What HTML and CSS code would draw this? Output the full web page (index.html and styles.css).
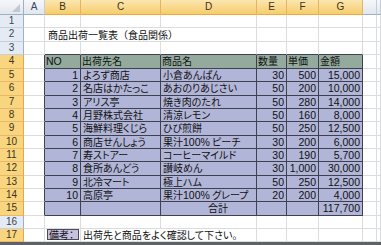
FILE: index.html
```html
<!DOCTYPE html>
<html lang="ja">
<head>
<meta charset="utf-8">
<title>商品出荷一覧表</title>
<link rel="stylesheet" href="styles.css">
</head>
<body>
<div class="sheet">
  <div class="c corner"><span class="tri"></span></div>
  <div class="c ch">A</div>
  <div class="c ch sel">B</div>
  <div class="c ch sel">C</div>
  <div class="c ch sel">D</div>
  <div class="c ch sel">E</div>
  <div class="c ch sel">F</div>
  <div class="c ch sel">G</div>
  <div class="c ch"></div>
  <div class="c ch"></div>

  <div class="c rh">1</div>
  <div class="c"></div><div class="c"></div><div class="c"></div><div class="c"></div><div class="c"></div><div class="c"></div><div class="c"></div><div class="c"></div><div class="c"></div>

  <div class="c rh">2</div>
  <div class="c"></div>
  <div class="c title span3">商品出荷一覧表（食品関係）</div>
  <div class="c"></div><div class="c"></div><div class="c"></div><div class="c"></div><div class="c"></div>

  <div class="c rh">3</div>
  <div class="c"></div>
  <div class="c tt"></div><div class="c tt"></div><div class="c tt"></div><div class="c tt"></div><div class="c tt"></div><div class="c tt"></div>
  <div class="c"></div><div class="c"></div>

  <div class="c rh sel">4</div>
  <div class="c tl"></div>
  <div class="c t th"><span class="hw">NO</span></div>
  <div class="c t th">出荷先名</div>
  <div class="c t th">商品名</div>
  <div class="c t th">数量</div>
  <div class="c t th">単価</div>
  <div class="c t th">金額</div>
  <div class="c"></div><div class="c"></div>

  <div class="c rh sel">5</div>
  <div class="c tl"></div>
  <div class="c t n">1</div><div class="c t">よろず商店</div><div class="c t">小倉あんぱん</div>
  <div class="c t n">30</div><div class="c t n">500</div><div class="c t n">15,000</div>
  <div class="c"></div><div class="c"></div>

  <div class="c rh sel">6</div>
  <div class="c tl"></div>
  <div class="c t n">2</div><div class="c t">名店はかたっこ</div><div class="c t">あおのりあじさい</div>
  <div class="c t n">50</div><div class="c t n">200</div><div class="c t n">10,000</div>
  <div class="c"></div><div class="c"></div>

  <div class="c rh sel">7</div>
  <div class="c tl"></div>
  <div class="c t n">3</div><div class="c t">アリス亭</div><div class="c t">焼き肉のたれ</div>
  <div class="c t n">50</div><div class="c t n">280</div><div class="c t n">14,000</div>
  <div class="c"></div><div class="c"></div>

  <div class="c rh sel">8</div>
  <div class="c tl"></div>
  <div class="c t n">4</div><div class="c t">月野株式会社</div><div class="c t">清涼レモン</div>
  <div class="c t n">50</div><div class="c t n">160</div><div class="c t n">8,000</div>
  <div class="c"></div><div class="c"></div>

  <div class="c rh sel">9</div>
  <div class="c tl"></div>
  <div class="c t n">5</div><div class="c t">海鮮料理くじら</div><div class="c t">ひび煎餅</div>
  <div class="c t n">50</div><div class="c t n">250</div><div class="c t n">12,500</div>
  <div class="c"></div><div class="c"></div>

  <div class="c rh sel">10</div>
  <div class="c tl"></div>
  <div class="c t n">6</div><div class="c t">商店せんしょう</div><div class="c t">果汁<span class="hw">100%</span> ピーチ</div>
  <div class="c t n">30</div><div class="c t n">200</div><div class="c t n">6,000</div>
  <div class="c"></div><div class="c"></div>

  <div class="c rh sel">11</div>
  <div class="c tl"></div>
  <div class="c t n">7</div><div class="c t">寿ストアー</div><div class="c t">コーヒーマイルド</div>
  <div class="c t n">30</div><div class="c t n">190</div><div class="c t n">5,700</div>
  <div class="c"></div><div class="c"></div>

  <div class="c rh sel">12</div>
  <div class="c tl"></div>
  <div class="c t n">8</div><div class="c t">食所あんどう</div><div class="c t">讃岐めん</div>
  <div class="c t n">30</div><div class="c t n">1,000</div><div class="c t n">30,000</div>
  <div class="c"></div><div class="c"></div>

  <div class="c rh sel">13</div>
  <div class="c tl"></div>
  <div class="c t n">9</div><div class="c t">北冷マート</div><div class="c t">極上ハム</div>
  <div class="c t n">50</div><div class="c t n">250</div><div class="c t n">12,500</div>
  <div class="c"></div><div class="c"></div>

  <div class="c rh sel">14</div>
  <div class="c tl"></div>
  <div class="c t n">10</div><div class="c t">高原亭</div><div class="c t">果汁<span class="hw">100%</span> グレープ</div>
  <div class="c t n">20</div><div class="c t n">200</div><div class="c t n">4,000</div>
  <div class="c"></div><div class="c"></div>

  <div class="c rh sel">15</div>
  <div class="c tl"></div>
  <div class="c t"></div><div class="c t"></div><div class="c t total">合計</div>
  <div class="c t"></div><div class="c t"></div><div class="c t n">117,700</div>
  <div class="c"></div><div class="c"></div>

  <div class="c rh">16</div>
  <div class="c"></div><div class="c"></div><div class="c"></div><div class="c"></div><div class="c"></div><div class="c"></div><div class="c"></div><div class="c"></div><div class="c"></div>

  <div class="c rh sel">17</div>
  <div class="c"></div>
  <div class="c note"><span class="note-box">備考：</span></div>
  <div class="c span2 remark">出荷先と商品をよく確認して下さい。</div>
  <div class="c"></div><div class="c"></div><div class="c"></div><div class="c"></div><div class="c"></div>
</div>
</body>
</html>
```
FILE: styles.css
```css
html, body {
  margin: 0;
  padding: 0;
  background: #ffffff;
}

body {
  width: 381px;
  height: 245px;
  overflow: hidden;
}

.sheet {
  display: grid;
  grid-template-columns: 24px 21px 36px 80px 96px 30px 32px 44px 14px 4px;
  grid-template-rows: 15px 13px 14px 13px 14px 13px 14px 13px 13px 14px 13px 13px 14px 13px 13px 14px 13px 13px;
  width: 381px;
  border-bottom: 3px solid #5e6166;
  background: #ffffff;
}

.c {
  box-sizing: border-box;
  border-right: 1px solid #dadcdd;
  border-bottom: 1px solid #dadcdd;
  font-family: "Noto Sans CJK JP", sans-serif;
  font-size: 10px;
  line-height: 12px;
  font-feature-settings: "palt" 1;
  color: #111111;
  white-space: nowrap;
  padding: 0 1px 0 2px;
  min-width: 0;
}

.span3 { grid-column: span 3; }
.span2 { grid-column: span 2; }

.title {
  padding-left: 3px;
  line-height: 13px;
  font-feature-settings: normal;
}

.remark {
  padding-left: 2px;
}

/* column headers */
.ch {
  background: linear-gradient(#f5f7fa, #e2e7ee);
  border-right-color: #c6ccd5;
  border-bottom-color: #9eb0c6;
  font-family: "Liberation Sans", Arial, sans-serif;
  font-size: 10px;
  line-height: 14px;
  text-align: center;
  color: #3b4656;
  padding: 0;
}

.ch.sel {
  background: linear-gradient(#fbe6b0, #f6cd6c);
  border-right-color: #e2b562;
  border-bottom-color: #f0a73e;
  color: #3a3420;
}

.corner {
  position: relative;
  background: linear-gradient(#f5f7fa, #e2e7ee);
  border-right-color: #9eb0c6;
  border-bottom-color: #9eb0c6;
  padding: 0;
}

.tri {
  position: absolute;
  right: 3px;
  bottom: 2px;
  width: 0;
  height: 0;
  border-left: 8px solid transparent;
  border-bottom: 8px solid #c2c8d0;
}

/* row headers */
.rh {
  background: #e4ebf4;
  border-right-color: #9eb0c6;
  border-bottom-color: #c5d0dd;
  font-family: "Liberation Sans", Arial, sans-serif;
  font-size: 10px;
  line-height: 12px;
  text-align: center;
  color: #3b4656;
  padding: 0;
}

.rh.sel {
  background: #f8d57e;
  border-right-color: #e8a740;
  border-bottom-color: #e6b968;
  color: #3a3420;
}

/* table */
.tt { border-bottom-color: #3d4150; }
.tl { border-right-color: #3d4150; }

.t {
  background: #b1b5d7;
  border-right-color: #3d4150;
  border-bottom-color: #3d4150;
}

.th {
  background: #93aa9c;
  padding-left: 1px;
}

.n {
  text-align: right;
  font-family: "Liberation Sans Narrow", "Liberation Sans", Arial, sans-serif;
  font-size: 10.5px;
  padding-right: 2px;
}

.hw {
  font-family: "Liberation Sans Narrow", "Liberation Sans", Arial, sans-serif;
  font-size: 10.5px;
}

.total {
  text-align: center;
  padding-left: 20px;
}

.note {
  padding: 0 1px 1px 2px;
}

.note-box {
  display: block;
  box-sizing: border-box;
  height: 11px;
  background: #c9c2df;
  border: 1px solid #4a4a5a;
  line-height: 9px;
  padding-left: 1px;
}
```
